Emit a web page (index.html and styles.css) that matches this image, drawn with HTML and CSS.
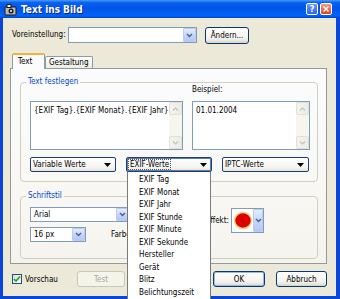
FILE: index.html
```html
<!DOCTYPE html>
<html lang="de">
<head>
    <meta charset="UTF-8">
    <title>Text ins Bild</title>
    <link rel="stylesheet" href="styles.css">
</head>
<body>

<div class="window">
    <div class="titlebar">
        <svg class="app-icon" width="13" height="13" viewBox="0 0 13 13">
            <rect x="1" y="4" width="11" height="8" rx="1" fill="#b8b8b8" stroke="#1a1a1a"/>
            <rect x="3" y="1.5" width="4" height="3" fill="#e8e8e8" stroke="#1a1a1a"/>
            <circle cx="7" cy="8" r="2.5" fill="#1a1a1a"/>
            <circle cx="7" cy="8" r="1" fill="#ffffff"/>
        </svg>
        <span class="title">Text ins Bild</span>
        <span class="cap-btn cap-help">?</span>
        <span class="cap-btn cap-close">
            <svg width="6" height="6" viewBox="0 0 6 6"><path d="M0.5 0.5 L5.5 5.5 M5.5 0.5 L0.5 5.5" stroke="#fff" stroke-width="1.4"/></svg>
        </span>
    </div>

    <div class="frame">
        <!-- Voreinstellung -->
        <div class="preset-row">
            <label class="preset-label">Voreinstellung:</label>
            <div class="combo preset-combo">
                <span class="combo-text"></span>
                <span class="combo-arrow"><svg width="7" height="5" viewBox="0 0 7 5"><polyline points="1,1 3.5,3.5 6,1" fill="none" stroke="#4d6185" stroke-width="1.4"/></svg></span>
            </div>
            <button class="btn change-btn">Ändern...</button>
        </div>

        <!-- Reiter -->
        <div class="tabs">
            <div class="tab active">Text</div>
            <div class="tab">Gestaltung</div>
        </div>

        <div class="tab-page">
            <fieldset class="group text-group">
                <legend>Text festlegen</legend>
                <div class="text-grid">
                    <span></span>
                    <label class="example-label">Beispiel:</label>
                    <div class="textbox">
                        <div class="tb-text">{EXIF Tag}.{EXIF Monat}.{EXIF Jahr}</div>
                        <div class="vscroll">
                            <span class="sb-btn"><svg width="7" height="4" viewBox="0 0 7 4"><polyline points="1,3.5 3.5,1 6,3.5" fill="none" stroke="#c3c3bc" stroke-width="1.2"/></svg></span>
                            <span class="sb-track"></span>
                            <span class="sb-btn"><svg width="7" height="4" viewBox="0 0 7 4"><polyline points="1,0.5 3.5,3 6,0.5" fill="none" stroke="#c3c3bc" stroke-width="1.2"/></svg></span>
                        </div>
                    </div>
                    <div class="textbox">
                        <div class="tb-text">01.01.2004</div>
                        <div class="vscroll">
                            <span class="sb-btn"><svg width="7" height="4" viewBox="0 0 7 4"><polyline points="1,3.5 3.5,1 6,3.5" fill="none" stroke="#c3c3bc" stroke-width="1.2"/></svg></span>
                            <span class="sb-track"></span>
                            <span class="sb-btn"><svg width="7" height="4" viewBox="0 0 7 4"><polyline points="1,0.5 3.5,3 6,0.5" fill="none" stroke="#c3c3bc" stroke-width="1.2"/></svg></span>
                        </div>
                    </div>
                </div>

                <div class="menu-row">
                    <div class="menu-btn">
                        <span>Variable Werte</span>
                        <svg width="7" height="4" viewBox="0 0 7 4"><polygon points="0,0 7,0 3.5,4" fill="#000"/></svg>
                    </div>
                    <div class="menu-wrap">
                        <div class="menu-btn open">
                            <span class="focus-text">EXIF-Werte</span>
                            <svg width="7" height="4" viewBox="0 0 7 4"><polygon points="0,0 7,0 3.5,4" fill="#000"/></svg>
                        </div>
                        <ul class="dropdown">
                            <li>EXIF Tag</li>
                            <li>EXIF Monat</li>
                            <li>EXIF Jahr</li>
                            <li>EXIF Stunde</li>
                            <li>EXIF Minute</li>
                            <li>EXIF Sekunde</li>
                            <li>Hersteller</li>
                            <li>Gerät</li>
                            <li>Blitz</li>
                            <li>Belichtungszeit</li>
                        </ul>
                    </div>
                    <div class="menu-btn">
                        <span>IPTC-Werte</span>
                        <svg width="7" height="4" viewBox="0 0 7 4"><polygon points="0,0 7,0 3.5,4" fill="#000"/></svg>
                    </div>
                </div>
            </fieldset>

            <fieldset class="group style-group">
                <legend>Schriftstil</legend>
                <div class="style-row">
                    <div class="style-left">
                        <div class="combo font-combo">
                            <span class="combo-text">Arial</span>
                            <span class="combo-arrow"><svg width="7" height="5" viewBox="0 0 7 5"><polyline points="1,1 3.5,3.5 6,1" fill="none" stroke="#4d6185" stroke-width="1.4"/></svg></span>
                        </div>
                        <div class="size-row">
                            <div class="combo size-combo">
                                <span class="combo-text">16 px</span>
                                <span class="combo-arrow"><svg width="7" height="5" viewBox="0 0 7 5"><polyline points="1,1 3.5,3.5 6,1" fill="none" stroke="#4d6185" stroke-width="1.4"/></svg></span>
                            </div>
                            <label class="color-label">Farbe:</label>
                        </div>
                    </div>
                    <div class="fx">
                        <label class="fx-label">Effekt:</label>
                        <div class="color-combo">
                            <span class="swatch">
                                <svg width="20" height="19" viewBox="0 0 20 19"><ellipse cx="10" cy="9.5" rx="8.5" ry="8" fill="#dd0000" stroke="#f7d77a" stroke-width="1.5"/></svg>
                            </span>
                            <span class="combo-arrow"><svg width="7" height="5" viewBox="0 0 7 5"><polyline points="1,1 3.5,3.5 6,1" fill="none" stroke="#4d6185" stroke-width="1.4"/></svg></span>
                        </div>
                    </div>
                </div>
            </fieldset>
        </div>

        <!-- Untere Leiste -->
        <div class="bottom-row">
            <div class="check">
                <span class="checkbox">
                    <svg width="8" height="8" viewBox="0 0 8 8"><polyline points="1,4 3,6 7,1.5" fill="none" stroke="#21a121" stroke-width="1.6"/></svg>
                </span>
                <span>Vorschau</span>
            </div>
            <button class="btn test-btn" disabled>Test</button>
            <button class="btn ok-btn">OK</button>
            <button class="btn cancel-btn">Abbruch</button>
        </div>
    </div>
</div>

</body>
</html>
```

FILE: styles.css
```css
* {
    box-sizing: border-box;
}
html, body {
    margin: 0;
    padding: 0;
}
body {
    width: 340px;
    height: 299px;
    overflow: hidden;
    background: #fff;
    font-family: "DejaVu Sans Condensed", "DejaVu Sans", sans-serif;
    font-stretch: condensed;
    font-size: 8px;
    color: #000;
}

.window {
    width: 340px;
    height: 299px;
    display: flex;
    flex-direction: column;
}

/* Titelleiste */
.titlebar {
    flex: none;
    height: 18px;
    display: flex;
    align-items: center;
    padding: 0 8px 0 4px;
    background: linear-gradient(#4a9bff 0%, #0a62f2 14%, #0055e5 45%, #0063f8 85%, #0057ec 93%, #0040d2 100%);
}
.app-icon {
    flex: none;
}
.title {
    flex: 1;
    margin-left: 4px;
    color: #fff;
    font-weight: bold;
    font-size: 10px;
    text-shadow: 1px 1px 0 #0a1e8c;
}
.cap-btn {
    width: 12px;
    height: 12px;
    border: 1px solid #fff;
    border-radius: 2px;
    display: flex;
    align-items: center;
    justify-content: center;
    color: #fff;
    font-weight: bold;
    font-size: 9px;
    font-family: "DejaVu Sans", sans-serif;
}
.cap-help {
    margin-right: 2px;
    background: linear-gradient(#6a9cf8, #2a63e6);
}
.cap-close {
    background: linear-gradient(#f2a084, #d9461c);
}

/* Fensterrahmen */
.frame {
    flex: 1;
    display: flex;
    flex-direction: column;
    background: #ece9d8;
    border: solid #0b45d9;
    border-width: 0 4px 3px 3px;
    padding: 0 9px 0 7px;
}

/* Voreinstellung */
.preset-row {
    margin-top: 9px;
    padding-left: 2px;
    display: flex;
    align-items: flex-start;
    height: 17px;
}
.preset-label {
    width: 56px;
    line-height: 16px;
}
.combo {
    display: flex;
    align-items: stretch;
    height: 15px;
    background: #fff;
    border: 1px solid #7f9db9;
}
.combo-text {
    flex: 1;
    padding-left: 3px;
    line-height: 13px;
    white-space: nowrap;
    overflow: hidden;
}
.combo-arrow {
    flex: none;
    width: 13px;
    display: flex;
    align-items: center;
    justify-content: center;
    background: linear-gradient(#e3ebfd, #c1d3fb 60%, #b4c8f6);
    border: 1px solid #b9cbf3;
    border-radius: 1px;
}
.preset-combo {
    width: 129px;
    height: 16px;
}
.change-btn {
    margin-left: 8px;
    width: 44px;
    height: 17px;
}

/* Buttons */
.btn {
    font-family: inherit;
    font-stretch: inherit;
    font-size: 8px;
    color: #000;
    padding: 0;
    border: 1px solid #003c74;
    border-radius: 3px;
    background: linear-gradient(#ffffff, #f3f2ec 70%, #e3e0d6 90%, #d6d0c5);
}
.btn:disabled {
    color: #aca899;
    border-color: #c9c7ba;
    background: #f5f4ea;
}

/* Reiter */
.tabs {
    margin-top: 9px;
    height: 15px;
    padding-left: 2px;
    display: flex;
    align-items: flex-end;
}
.tab {
    height: 12px;
    padding: 0 3px;
    line-height: 11px;
    border: 1px solid #919b9c;
    border-bottom: none;
    border-radius: 2px 2px 0 0;
    background: linear-gradient(#ffffff, #f3f3ef 60%, #ecebe6);
}
.tab.active {
    position: relative;
    z-index: 1;
    height: 16px;
    width: 33px;
    margin-bottom: -1px;
    padding: 0 0 0 5px;
    line-height: 13px;
    background: #fcfcfe;
    border-top: 2px solid #f4b23b;
}
.tab-page {
    height: 196px;
    border: 1px solid #919b9c;
    padding: 8px 8px 0 9px;
    background: linear-gradient(#fcfcfe, #f7f6f1 80%, #f4f3ee);
}

/* Gruppen */
.group {
    margin: 0;
    min-width: 0;
    padding: 0 8px 0 9px;
    border: 1px solid #d0d0bf;
    border-radius: 4px;
}
.group legend {
    margin-left: -4px;
    padding: 0 2px;
    line-height: 10px;
    color: #0046d5;
}
.text-group {
    height: 105px;
}
.style-group {
    margin-top: 9px;
    height: 68px;
}

.text-grid {
    margin-top: -2px;
    display: grid;
    grid-template-columns: 153px 118px;
    grid-template-rows: 10px 49px;
    column-gap: 9px;
    row-gap: 6px;
}
.example-label {
    line-height: 10px;
}
.textbox {
    display: flex;
    background: #fff;
    border: 1px solid #7f9db9;
}
.tb-text {
    flex: 1;
    padding: 4px 3px;
    line-height: 10px;
    white-space: nowrap;
    overflow: hidden;
}
.vscroll {
    flex: none;
    width: 13px;
    display: flex;
    flex-direction: column;
    background: #f6f5ee;
}
.sb-btn {
    height: 13px;
    display: flex;
    align-items: center;
    justify-content: center;
    background: linear-gradient(90deg, #f4f3ee, #ecebe4);
    border: 1px solid #e3e1d7;
    border-radius: 2px;
}
.sb-track {
    flex: 1;
}

/* Werte-Menüs */
.menu-row {
    margin-top: 7px;
    height: 15px;
    display: grid;
    grid-template-columns: 86px 86px 87px;
    justify-content: space-between;
}
.menu-wrap {
    position: relative;
}
.menu-btn {
    height: 15px;
    display: flex;
    align-items: center;
    justify-content: space-between;
    padding: 0 4px 0 2px;
    border: 1px solid #1c3f74;
    border-radius: 2px;
    background: linear-gradient(#ffffff, #f6f5f1 70%, #e6e3da);
}
.menu-btn.open {
    box-shadow: inset 0 0 0 1px #5a7bb8;
}
.focus-text {
    outline: 1px dotted #555;
    outline-offset: 0;
    padding: 0 1px;
}
.dropdown {
    position: absolute;
    top: 15px;
    left: 1px;
    z-index: 10;
    width: 84px;
    height: 132px;
    margin: 0;
    padding: 2px 0 0 11px;
    list-style: none;
    background: #fff;
    border: 1px solid #7a7a7a;
    border-top: none;
}
.dropdown li {
    line-height: 12.5px;
    white-space: nowrap;
}

/* Schriftstil */
.style-row {
    margin-top: 6px;
    display: flex;
    align-items: flex-start;
}
.style-left {
    flex: none;
    width: 100px;
    display: flex;
    flex-direction: column;
    row-gap: 5px;
}
.font-combo {
    width: 100px;
}
.size-row {
    display: flex;
    align-items: center;
}
.size-combo {
    flex: none;
    width: 56px;
}
.color-label {
    margin-left: 25px;
}
.fx {
    margin-left: 73px;
    margin-top: 1px;
    display: flex;
    align-items: center;
}
.fx-label {
    width: 26px;
    text-align: right;
}
.color-combo {
    margin-left: 2px;
    width: 33px;
    height: 25px;
    display: flex;
    background: #fff;
    border: 1px solid #7f9db9;
}
.swatch {
    flex: 1;
    display: flex;
    align-items: center;
    justify-content: center;
}
.color-combo .combo-arrow {
    width: 10px;
}

/* Untere Leiste */
.bottom-row {
    margin-top: 7px;
    height: 16px;
    padding-left: 2px;
    display: flex;
    align-items: center;
}
.check {
    width: 65px;
    display: flex;
    align-items: center;
    column-gap: 3px;
}
.checkbox {
    width: 10px;
    height: 10px;
    display: flex;
    align-items: center;
    justify-content: center;
    border: 1px solid #1c5180;
    background: linear-gradient(135deg, #dcdcd7, #ffffff);
}
.test-btn {
    width: 48px;
    height: 16px;
}
.ok-btn {
    margin-left: auto;
    width: 52px;
    height: 16px;
    box-shadow: inset 0 0 0 1px #9ab9ea;
}
.cancel-btn {
    margin-left: 11px;
    width: 51px;
    height: 16px;
}
```
